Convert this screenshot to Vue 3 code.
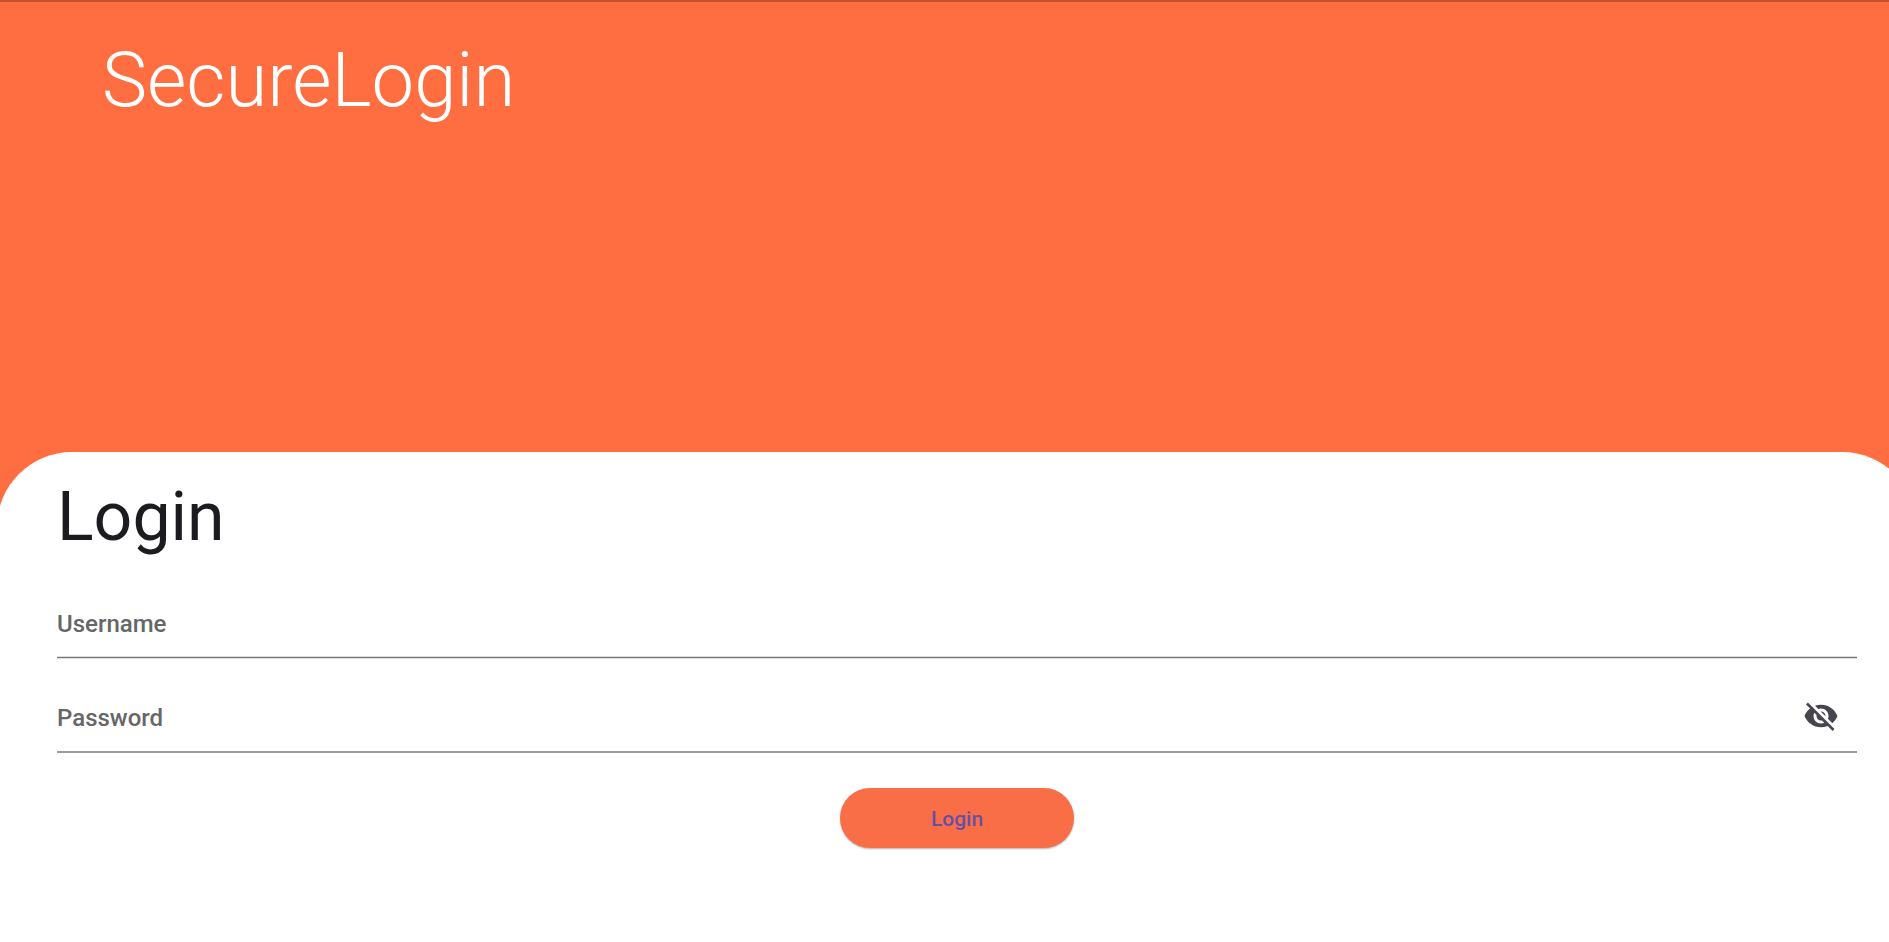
<script setup>
import { ref } from 'vue'

const username = ref('')
const password = ref('')
const visible = ref(false)
</script>

<template>
  <div class="page">
    <header class="hero">
      <h1 class="brand">SecureLogin</h1>
    </header>
    <main class="sheet">
      <h2 class="title">Login</h2>
      <form @submit.prevent>
        <div class="field">
          <input v-model="username" type="text" placeholder="Username" aria-label="Username" autocomplete="username" />
        </div>
        <div class="field field-password">
          <input v-model="password" :type="visible ? 'text' : 'password'" placeholder="Password" aria-label="Password" autocomplete="current-password" />
          <button class="toggle" type="button" aria-label="Toggle password visibility" @click="visible = !visible">
            <svg viewBox="0 0 24 24" aria-hidden="true">
              <path d="M12 7c2.76 0 5 2.24 5 5 0 .65-.13 1.26-.36 1.83l2.92 2.92c1.51-1.26 2.7-2.89 3.43-4.75-1.73-4.39-6-7.5-11-7.5-1.4 0-2.74.25-3.98.7l2.16 2.16C10.74 7.13 11.35 7 12 7zM2 4.27l2.28 2.28.46.46C3.08 8.3 1.78 10.02 1 12c1.73 4.39 6 7.5 11 7.5 1.55 0 3.03-.3 4.38-.84l.42.42L19.73 22 21 20.73 3.27 3 2 4.27zM7.53 9.8l1.55 1.55c-.05.21-.08.43-.08.65 0 1.66 1.34 3 3 3 .22 0 .44-.03.65-.08l1.55 1.55c-.67.33-1.41.53-2.2.53-2.76 0-5-2.24-5-5 0-.79.2-1.53.53-2.2zm4.31-.78l3.15 3.15.02-.16c0-1.66-1.34-3-3-3l-.17.01z" />
            </svg>
          </button>
        </div>
        <button class="submit" type="submit">Login</button>
      </form>
    </main>
  </div>
</template>

<style>
body {
  margin: 0;
  background: #fff;
}
</style>

<style scoped>
.page {
  min-height: 100vh;
  box-sizing: border-box;
  overflow: hidden;
  border-top: 2px solid #bf5330;
  background: linear-gradient(#ff6e40 600px, #fff 600px);
  font-family: Roboto, "Liberation Sans", sans-serif;
}

.hero {
  box-sizing: border-box;
  height: 450px;
  padding: 34px 102px;
}

.brand {
  margin: 0;
  color: #fff;
  font-size: 76px;
  font-weight: 300;
  line-height: 88px;
}

.sheet {
  margin: 0 -28px 0 -3px;
  padding: 25px 60px 60px;
  border-radius: 75px 75px 0 0;
  background: #fff;
}

.title {
  margin: 0;
  color: #1d1b20;
  font-size: 68px;
  font-weight: 400;
  line-height: 80px;
}

.field {
  display: flex;
  align-items: center;
  box-sizing: border-box;
  height: 72px;
  margin-top: 29px;
  border-bottom: 1px solid #77777b;
  box-shadow: 0 1px #dedee1, inset 0 -1px #dedee1;
}

.field-password {
  height: 73px;
  margin-top: 22px;
  border-bottom: 2px solid #9999a0;
  box-shadow: none;
}

.field input {
  flex: 1;
  min-width: 0;
  padding: 4px 0 0;
  border: 0;
  outline: 0;
  background: transparent;
  color: #1d1b20;
  font: 500 24px/36px Roboto, "Liberation Sans", sans-serif;
}

.field input::placeholder {
  color: #666;
  opacity: 1;
}

.toggle {
  display: flex;
  padding: 18px;
  border: 0;
  background: none;
  cursor: pointer;
}

.toggle svg {
  width: 36px;
  height: 36px;
  fill: #49454f;
}

.submit {
  display: block;
  width: 234px;
  height: 60px;
  margin: 35px auto 0;
  padding: 2px 0 0;
  border: 0;
  border-radius: 30px;
  background: #f96e46;
  box-shadow: 0 1px 2px rgba(0, 0, 0, 0.3);
  color: #6750a4;
  font: 500 21px/30px Roboto, "Liberation Sans", sans-serif;
  cursor: pointer;
}
</style>
